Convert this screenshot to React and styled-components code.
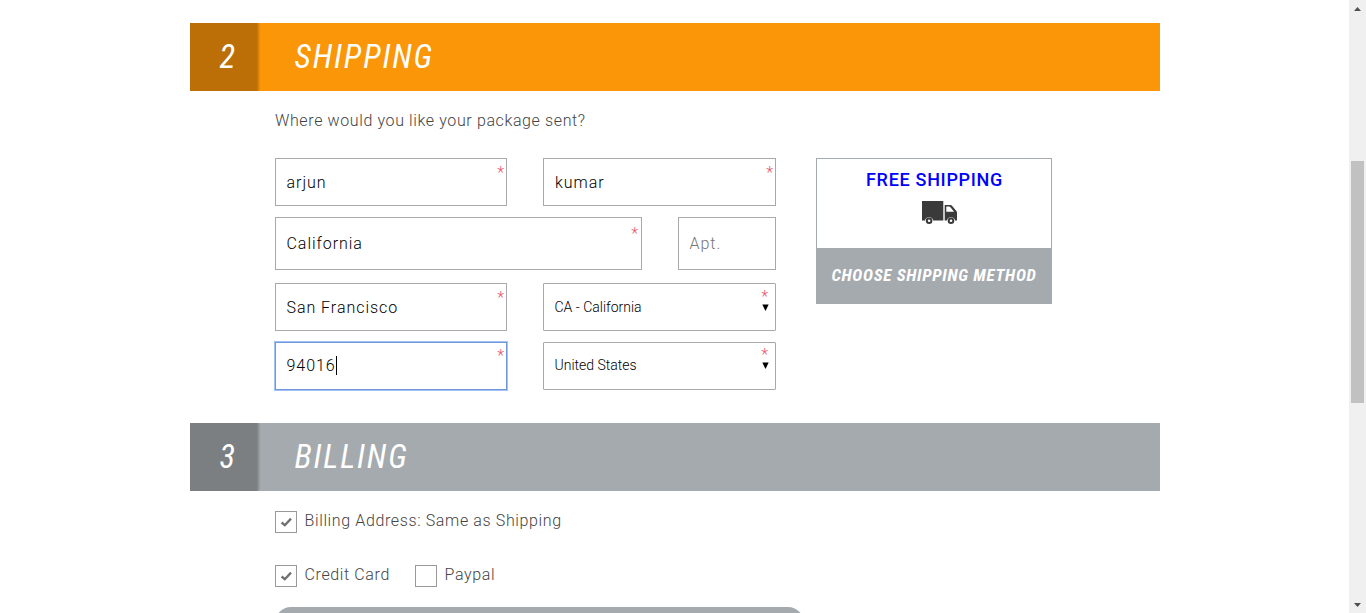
import React from "react";
import styled, { createGlobalStyle, css } from "styled-components";

const Global = createGlobalStyle`
  * { box-sizing: border-box; }
  html, body { margin: 0; height: 100%; overflow: hidden; background: #fff; }
  body { font-family: Roboto, "Liberation Sans", sans-serif; font-weight: 300; font-size: 16px; color: #444; }
`;

const condensed = css`
  font-family: "Roboto Condensed", Roboto, sans-serif;
  font-stretch: 75%;
  font-style: italic;
`;

const Viewport = styled.div`
  display: flex;
  width: 1366px;
  height: 613px;
  overflow: hidden;
`;
const Page = styled.main`
  flex: 1;
  padding: 23px 189px 0 190px;
`;
const Scrollbar = styled.aside`
  width: 17px;
  display: flex;
  flex-direction: column;
  align-items: center;
  background: #f0f0f0;
  padding: 7px 0 6px;
`;
const Thumb = styled.div`
  width: 13px;
  height: 242px;
  margin: 150px 0 auto;
  background: #c1c1c1;
`;

const StepHeader = styled.header`
  display: flex;
  height: 68px;
  background: ${(p) => (p.$active ? "#fa9608" : "#a5aaae")};
  color: #fff;
  ${condensed}
  font-weight: 400;
  font-size: 32.4px;
  line-height: 69px;
`;
const StepNumber = styled.div`
  width: 68px;
  background: ${(p) =>
    p.$active
      ? "linear-gradient(to right, #bb6f06 67px, #c87807 67px)"
      : "linear-gradient(to right, #7b7f82 67px, #85898c 67px)"};
  box-shadow: 1px 0 2px rgba(0, 0, 0, 0.2);
  clip-path: inset(0 -3px 0 0);
  padding-left: 29.5px;
`;
const StepTitle = styled.h2`
  margin: 0 0 0 36.5px;
  font: inherit;
  font-stretch: 75%;
  letter-spacing: 1.9px;
`;

const Body = styled.section`
  padding-left: 85px;
`;
const Prompt = styled.p`
  margin: 0;
  height: 67px;
  padding-top: 20px;
  line-height: 20px;
  letter-spacing: 0.62px;
`;
const Columns = styled.div`
  display: flex;
  align-items: flex-start;
  gap: 40px;
  height: 265px;
`;
const Form = styled.div`
  width: 501px;
  display: flex;
  flex-direction: column;
`;
const FormRow = styled.div`
  display: flex;
  gap: 36px;
  height: ${(p) => p.$height || 48}px;
  margin-bottom: ${(p) => p.$after || 11}px;
`;
const Field = styled.div`
  position: relative;
  display: flex;
  align-items: center;
  width: ${(p) => p.$width}px;
  padding: 0 6px ${(p) => p.$lift || 0}px ${(p) => p.$indent || 10.5}px;
  border: 1px solid ${(p) => (p.$focus ? "#6f98dc" : "#a9a9a9")};
  border-radius: ${(p) => (p.$select ? 1 : 0)}px;
  box-shadow: ${(p) => (p.$focus ? "0 0 0 1px #a3c2f5" : "none")};
  background: #fff;
  color: ${(p) => (p.$placeholder ? "#757575" : "#000")};
  font-size: ${(p) => (p.$select ? 14 : 16)}px;
  letter-spacing: ${(p) => (p.$select ? 0 : 0.96)}px;
`;
const Required = styled.span`
  position: absolute;
  top: ${(p) => p.$top || 4}px;
  right: ${(p) => p.$right || 2}px;
  color: #e6556c;
  font-size: 16px;
  line-height: 19px;
  letter-spacing: 0;
`;
const Caret = styled.span`
  width: 1px;
  height: 19px;
  background: #000;
`;
const Arrow = styled.svg`
  margin: 2px 0 0 auto;
`;

const ShippingCard = styled.aside`
  width: 236px;
  height: 146px;
  display: flex;
  flex-direction: column;
  text-align: center;
`;
const Offer = styled.div`
  height: 90px;
  border: 1px solid #a5aaae;
  border-bottom: 0;
  padding-top: 10px;
  display: flex;
  flex-direction: column;
  align-items: center;
`;
const OfferTitle = styled.div`
  color: #00f;
  font-weight: 500;
  font-size: 18px;
  line-height: 22px;
  letter-spacing: 0.7px;
  padding-left: 1px;
`;
const Truck = styled.svg`
  margin: 10px 0 0 11px;
`;
const Choose = styled.button`
  height: 56px;
  border: 0;
  padding: 0 0 2px;
  background: #a5aaae;
  color: #fff;
  ${condensed}
  font-weight: 700;
  font-size: 17px;
  letter-spacing: 0.7px;
`;

const CheckRow = styled.div`
  display: flex;
  height: 22px;
  margin-top: ${(p) => p.$before}px;
`;
const CheckLabel = styled.label`
  display: flex;
  gap: 7.5px;
  width: ${(p) => p.$width}px;
  line-height: 20px;
  white-space: nowrap;
  letter-spacing: 0.63px;
`;
const Box = styled.span`
  display: flex;
  align-items: center;
  justify-content: center;
  width: 22px;
  height: 22px;
  border: 1px solid #999;
`;
const CardPanel = styled.div`
  width: 529px;
  height: 60px;
  margin-top: 20px;
  border-radius: 16px;
  background: #a5aaae;
`;

const Check = () => (
  <svg width="12" height="10" viewBox="0 0 12 10">
    <path d="M1.6 5.5 L4.8 8.2 L11 1.6" fill="none" stroke="#707070" strokeWidth="2.3" />
  </svg>
);
const DownArrow = () => (
  <Arrow width="7" height="8" viewBox="0 0 7 8">
    <path d="M.3 .5h6.4L3.5 7z" fill="#000" />
  </Arrow>
);

function Step({ n, title, active }) {
  return (
    <StepHeader $active={active}>
      <StepNumber $active={active}>{n}</StepNumber>
      <StepTitle>{title}</StepTitle>
    </StepHeader>
  );
}

export default function App() {
  return (
    <Viewport>
      <Global />
      <Page>
        <Step n="2" title="SHIPPING" active />
        <Body>
          <Prompt>Where would you like your package sent?</Prompt>
          <Columns>
            <Form>
              <FormRow>
                <Field $width={232}>arjun<Required>*</Required></Field>
                <Field $width={233} $indent={11}>kumar<Required>*</Required></Field>
              </FormRow>
              <FormRow $height={53} $after={13}>
                <Field $width={367}>California<Required $top={6} $right={3}>*</Required></Field>
                <Field $width={98} $placeholder>Apt.</Field>
              </FormRow>
              <FormRow>
                <Field $width={232}>San Francisco<Required>*</Required></Field>
                <Field $width={233} $select>CA - California<Required $top={3} $right={7}>*</Required><DownArrow /></Field>
              </FormRow>
              <FormRow>
                <Field $width={232} $focus $lift={2}>94016<Caret /><Required $top={3}>*</Required></Field>
                <Field $width={233} $select $lift={2}>United States<Required $top={2} $right={7}>*</Required><DownArrow /></Field>
              </FormRow>
            </Form>
            <ShippingCard>
              <Offer>
                <OfferTitle>FREE SHIPPING</OfferTitle>
                <Truck width="35" height="23" viewBox="0 0 35 23">
                  <path d="M0 0h21.3v19.5H11.2a4.2 4.2 0 0 0-8.2 0H0z" fill="#3a3a3a" />
                  <path fillRule="evenodd" d="M22.7 4h5.6q1.2 0 1.9 1l4.2 5q.6.8.6 1.8v7.7h-1.9a4.2 4.2 0 0 0-8.2 0h-2.2zM24.3 5.6v5.2h7.8l-3.7-4.6q-.5-.6-1.2-.6z" fill="#3a3a3a" />
                  <circle cx="7.1" cy="19.7" r="2.3" fill="none" stroke="#3a3a3a" strokeWidth="2" />
                  <circle cx="29" cy="19.7" r="2.3" fill="none" stroke="#3a3a3a" strokeWidth="2" />
                </Truck>
              </Offer>
              <Choose>CHOOSE SHIPPING METHOD</Choose>
            </ShippingCard>
          </Columns>
        </Body>
        <Step n="3" title="BILLING" />
        <Body>
          <CheckRow $before={20}>
            <CheckLabel><Box><Check /></Box>Billing Address: Same as Shipping</CheckLabel>
          </CheckRow>
          <CheckRow $before={32}>
            <CheckLabel $width={140}><Box><Check /></Box>Credit Card</CheckLabel>
            <CheckLabel><Box />Paypal</CheckLabel>
          </CheckRow>
          <CardPanel />
        </Body>
      </Page>
      <Scrollbar>
        <svg width="7" height="4" viewBox="0 0 7 4"><path d="M0 4L3.5 0 7 4z" fill="#505050" /></svg>
        <Thumb />
        <svg width="7" height="4" viewBox="0 0 7 4"><path d="M0 0L3.5 4 7 0z" fill="#505050" /></svg>
      </Scrollbar>
    </Viewport>
  );
}
